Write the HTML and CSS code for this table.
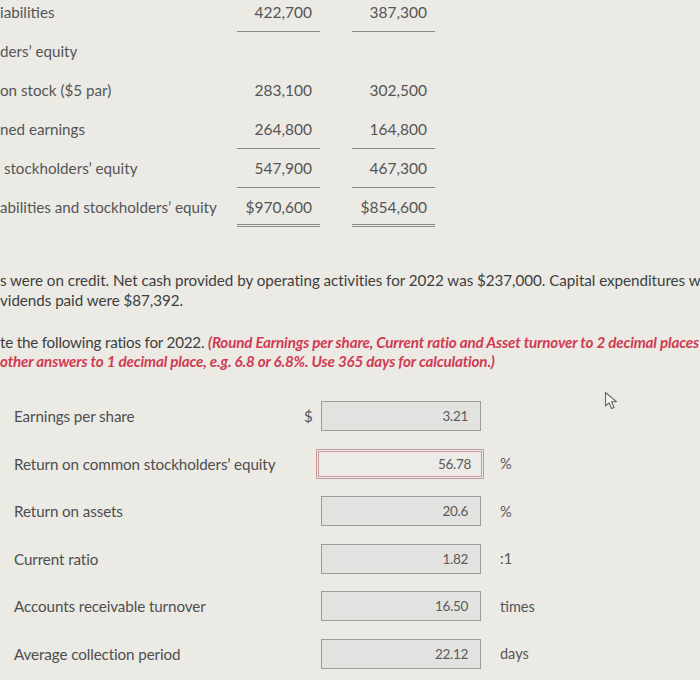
FILE: index.html
```html
<!DOCTYPE html>
<html>
<head>
<meta charset="utf-8">
<link rel="stylesheet" href="styles.css">
</head>
<body>
<div class="page">
  <div class="sheet">
    <div class="label">iabilities</div>
    <div class="num line">422,700</div>
    <div class="num line">387,300</div>

    <div class="label">ders’ equity</div>
    <div class="num"></div>
    <div class="num"></div>

    <div class="label">on stock ($5 par)</div>
    <div class="num">283,100</div>
    <div class="num">302,500</div>

    <div class="label">ned earnings</div>
    <div class="num line">264,800</div>
    <div class="num line">164,800</div>

    <div class="label">&nbsp;stockholders’ equity</div>
    <div class="num line">547,900</div>
    <div class="num line">467,300</div>

    <div class="label">abilities and stockholders’ equity</div>
    <div class="num dbl">$970,600</div>
    <div class="num dbl">$854,600</div>
  </div>

  <p class="info">s were on credit. Net cash provided by operating activities for 2022 was $237,000. Capital expenditures w<br>vidends paid were $87,392.</p>

  <p class="task">te the following ratios for 2022. <em class="note">(Round Earnings per share, Current ratio and Asset turnover to 2 decimal places</em><br><em class="note">other answers to 1 decimal place, e.g. 6.8 or 6.8%. Use 365 days for calculation.)</em></p>

  <div class="ratios">
    <div class="rlabel">Earnings per share</div>
    <div class="cur">$</div>
    <div class="field">3.21</div>
    <div class="unit"></div>

    <div class="rlabel">Return on common stockholders’ equity</div>
    <div class="cur"></div>
    <div class="field active">56.78</div>
    <div class="unit">%</div>

    <div class="rlabel">Return on assets</div>
    <div class="cur"></div>
    <div class="field">20.6</div>
    <div class="unit">%</div>

    <div class="rlabel">Current ratio</div>
    <div class="cur"></div>
    <div class="field">1.82</div>
    <div class="unit">:1</div>

    <div class="rlabel">Accounts receivable turnover</div>
    <div class="cur"></div>
    <div class="field">16.50</div>
    <div class="unit">times</div>

    <div class="rlabel">Average collection period</div>
    <div class="cur"></div>
    <div class="field">22.12</div>
    <div class="unit">days</div>
  </div>

  <svg class="pointer" width="16" height="20" viewBox="0 0 16 20">
    <path d="M1.5 1.5 L1.5 15 L5 11.8 L7.5 17.5 L10 16.4 L7.6 10.8 L12.5 10.6 Z" fill="#f4f3ef" stroke="#666" stroke-width="1.1" stroke-linejoin="round"/>
  </svg>
</div>
</body>
</html>
```

FILE: styles.css
```css
html, body {
  margin: 0;
  padding: 0;
  background: #ebeae5;
}
body {
  width: 700px;
  height: 680px;
  overflow: hidden;
  font-family: Lato, "Open Sans", sans-serif;
  color: #4e4e4e;
}
.page {
  position: relative;
  height: 680px;
}
.sheet {
  display: grid;
  grid-template-columns: 205px 83px 83px;
  column-gap: 32px;
  grid-auto-rows: 30px;
  row-gap: 9px;
  padding-top: 2px;
  font-size: 15.2px;
  line-height: 20px;
  color: #555;
}
.label {
  white-space: nowrap;
}
.num {
  text-align: right;
  padding-right: 8px;
  box-sizing: border-box;
  font-size: 15.5px;
}
.num.line {
  border-bottom: 1.5px solid #8a8a86;
  height: 30px;
}
.num.dbl {
  border-bottom: 3px double #8a8a86;
  height: 30px;
}
.info {
  margin: 43px 0 0;
  font-size: 15.2px;
  letter-spacing: -0.04px;
  line-height: 20px;
  white-space: nowrap;
  color: #3e3e3e;
}
.task {
  margin: 23px 0 0;
  font-size: 15.2px;
  letter-spacing: -0.2px;
  line-height: 19px;
  white-space: nowrap;
  color: #3e3e3e;
}
.note {
  color: #d23a52;
  font-weight: 700;
  font-style: italic;
  letter-spacing: -0.17px;
}
.ratios {
  display: grid;
  grid-template-columns: 300px 21px 160px auto;
  grid-auto-rows: 30px;
  row-gap: 17.6px;
  margin-top: 30px;
  font-size: 15.2px;
  align-items: center;
}
.rlabel {
  padding-left: 14px;
  letter-spacing: -0.1px;
  white-space: nowrap;
}
.cur {
  font-size: 15px;
  color: #555;
  padding-left: 4px;
}
.field {
  height: 30px;
  box-sizing: border-box;
  border: 1px solid #9c9c9a;
  background: #e2e2e1;
  text-align: right;
  padding-right: 12px;
  line-height: 28px;
  font-size: 13.5px;
  color: #5a5a5a;
  letter-spacing: -0.3px;
}
.field.active {
  border: 3px double #c49a9a;
  background: #ecebe7;
  margin-left: -5px;
  margin-right: -3px;
  line-height: 24px;
  padding-right: 10px;
}
.unit {
  padding-left: 19px;
  font-size: 14.5px;
  color: #555;
}
.pointer {
  position: absolute;
  left: 604px;
  top: 391px;
}
```
